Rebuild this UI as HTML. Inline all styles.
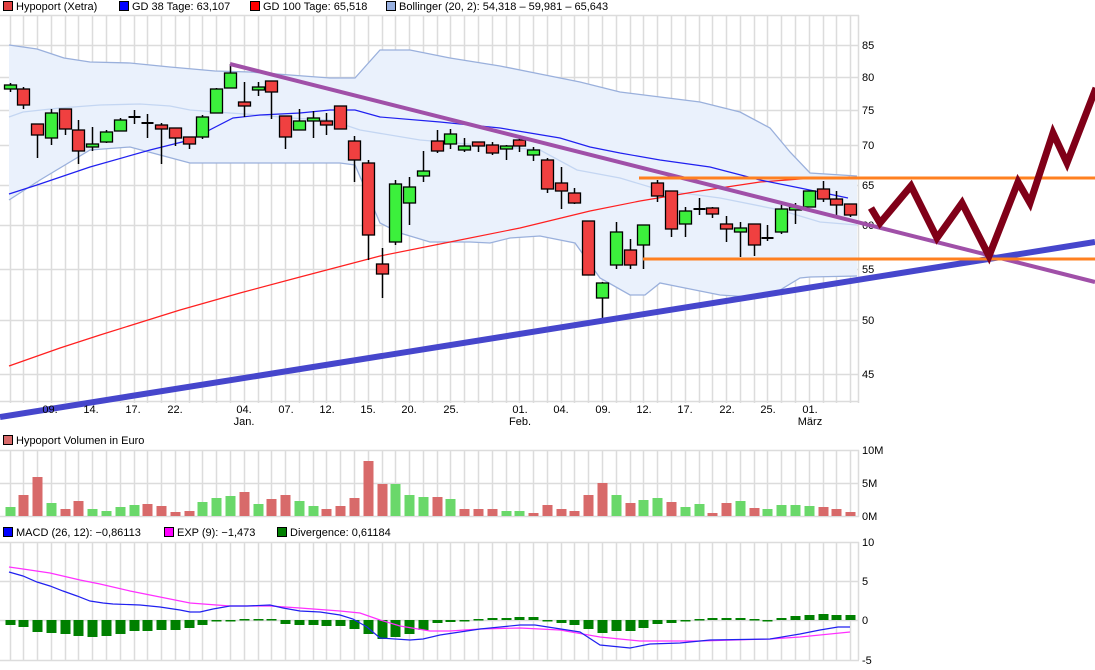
<!DOCTYPE html>
<html><head><meta charset="utf-8">
<style>
html,body{margin:0;padding:0;background:#fff;}
body{width:1095px;height:670px;overflow:hidden;font-family:"Liberation Sans",Arial,sans-serif;}
svg{display:block}
text{font-family:"Liberation Sans",Arial,sans-serif;font-size:11px;fill:#000}
</style></head>
<body>
<svg id="s" width="1095" height="670" xmlns="http://www.w3.org/2000/svg"></svg>
<script>
var S=document.getElementById('s');var h='';
function X(i){return 9.5+13.78*i;}
function pl(pts,c,w,extra){return '<polyline fill="none" stroke="'+c+'" stroke-width="'+w+'" points="'+pts.map(function(p){return p.join(',')}).join(' ')+'" '+(extra||'')+'/>';}
function leg(x,y,c,t){h+='<rect x="'+(x+0.5)+'" y="'+(y+0.5)+'" width="9" height="9" fill="'+c+'" stroke="#000"/><text x="'+(x+13)+'" y="'+(y+9)+'">'+t+'</text>';}
leg(3,1,'#e04040','Hypoport (Xetra)');leg(119,1,'#0000ff','GD 38 Tage: 63,107');leg(250,1,'#ff0000','GD 100 Tage: 65,518');leg(386,1,'#98b0e0','Bollinger (20, 2): 54,318 – 59,981 – 65,643');
leg(3,435,'#d86a6a','Hypoport Volumen in Euro');
leg(3,527,'#0000ff','MACD (26, 12): −0,86113');leg(164,527,'#ff00ff','EXP (9): −1,473');leg(277,527,'#008000','Divergence: 0,61184');
var g='#dcdcdc';
function vgrid(y1,y2){for(var i=0;i<62;i++){var x=Math.round(X(i))+0.5;h+='<line x1="'+x+'" y1="'+y1+'" x2="'+x+'" y2="'+y2+'" stroke="'+g+'" stroke-width="1.5"/>';}h+='<line x1="858.5" y1="'+y1+'" x2="858.5" y2="'+y2+'" stroke="'+g+'" stroke-width="1.5"/>';}
function hl(y,x2){h+='<line x1="0" y1="'+(y+0.5)+'" x2="'+(x2||859)+'" y2="'+(y+0.5)+'" stroke="'+g+'" stroke-width="1.5"/>';}
vgrid(15,403);
[15,45,77,110,145,185,225,269,320,374,401].forEach(function(y){hl(y)});
[[45,'85'],[77,'80'],[110,'75'],[145,'70'],[185,'65'],[225,'60'],[269,'55'],[320,'50'],[374,'45']].forEach(function(a){h+='<text x="862" y="'+(a[0]+4)+'">'+a[1]+'</text>';});
var up=[[9,45],[37,49],[64,58],[90,62],[130,63],[170,67],[215,71],[250,72],[290,75],[330,78],[355,78],[380,50],[410,50],[450,58],[500,66],[540,74],[580,82],[620,92],[660,97],[700,102],[740,112],[770,128],[790,152],[810,173],[857,176]];
var lo=[[9,200],[40,180],[90,150],[130,147],[160,155],[190,163],[300,163],[340,163],[355,165],[380,223],[400,233],[430,242],[470,242],[490,243],[510,238],[540,236],[575,243],[600,278],[630,295],[645,295],[660,283],[680,287],[720,295],[750,297],[780,290],[800,278],[810,277],[857,276]];
h+='<polygon fill="#eaf1fc" points="'+up.concat(lo.slice().reverse()).map(function(p){return p.join(',')}).join(' ')+'"/>';
h+=pl(up,'#9ab0dc',1.3);h+=pl(lo,'#9ab0dc',1.3);
h+=pl([[9,117],[23,112],[60,108],[100,105],[140,104],[170,106],[190,110],[230,113],[260,115],[290,118],[330,120],[360,130],[420,140],[480,145],[540,150],[577,170],[620,178],[660,190],[720,198],[780,210],[820,222],[857,225]],'#c4d6f2',1.3);
h+=pl([[9,366],[60,348],[100,335],[180,310],[240,293],[300,277],[380,256],[450,242],[520,228],[590,211],[640,201],[700,191],[760,182],[800,179],[850,177]],'#ff2020',1.2);
h+=pl([[9,194],[37,185],[90,167],[150,150],[190,140],[233,118],[260,115],[300,113],[330,110],[355,110],[380,117],[440,122],[500,128],[530,133],[560,138],[590,147],[620,153],[660,160],[710,167],[760,180],[800,188],[848,198]],'#2020f0',1.2);
var C=[[0,85,89,83,92,'g'],[1,89,105,87,109,'r'],[2,124,135,124,158,'r'],[3,113,138,109,145,'g'],[4,109,129,109,135,'r'],[5,130,151,120,164,'r'],[6,144,147,127,151,'g'],[7,132,142,130,143,'g'],[8,120,131,118,131,'g'],[9,117,117,110,124,'x'],[10,123,123,114,138,'x'],[11,125,129,123,164,'r'],[12,128,138,128,146,'r'],[13,137,144,137,149,'r'],[14,117,137,115,139,'g'],[15,89,113,88,113,'g'],[16,73,88,64,88,'g'],[17,102,106,82,117,'r'],[18,87,90,82,96,'g'],[19,81,92,81,119,'r'],[20,116,137,116,149,'r'],[21,121,130,109,130,'g'],[22,118,121,111,138,'g'],[23,121,125,113,135,'r'],[24,106,129,106,129,'r'],[25,141,160,136,182,'r'],[26,163,235,160,260,'r'],[27,264,274,248,298,'r'],[28,184,242,180,245,'g'],[29,187,203,177,225,'g'],[30,171,176,151,182,'g'],[31,141,151,130,153,'r'],[32,134,144,129,149,'g'],[33,146,150,138,152,'g'],[34,142,146,142,152,'r'],[35,145,153,142,155,'r'],[36,146,148,145,160,'g'],[37,140,146,135,152,'r'],[38,150,155,147,161,'g'],[39,160,189,158,193,'r'],[40,183,191,167,209,'r'],[41,193,203,188,204,'r'],[42,221,275,221,275,'r'],[43,283,298,282,323,'g'],[44,232,265,222,269,'g'],[45,250,265,239,269,'r'],[46,225,245,225,269,'g'],[47,183,196,180,202,'r'],[48,191,229,191,237,'r'],[49,211,224,207,237,'g'],[50,209,209,198,215,'x'],[51,208,214,207,218,'r'],[52,224,229,216,242,'r'],[53,228,232,222,257,'g'],[54,224,245,224,256,'r'],[55,238,238,225,241,'x'],[56,209,232,205,234,'g'],[57,207,210,203,224,'g'],[58,191,207,191,207,'g'],[59,189,199,181,202,'r'],[60,199,205,191,215,'r'],[61,204,215,204,217,'r']];
C.forEach(function(c){var x=Math.round(X(c[0]))+0.5;h+='<line x1="'+x+'" y1="'+c[3]+'" x2="'+x+'" y2="'+c[4]+'" stroke="#000" stroke-width="1.5"/>';
if(c[5]=='x'){h+='<line x1="'+(x-6)+'" y1="'+c[1]+'" x2="'+(x+6)+'" y2="'+c[1]+'" stroke="#000" stroke-width="2"/>';}
else h+='<rect x="'+(x-6)+'" y="'+c[1]+'" width="12" height="'+Math.max(3,c[2]-c[1])+'" fill="'+(c[5]=='g'?'#3cf03c':'#f04040')+'" stroke="#000" stroke-width="1.3"/>';});
h+='<line x1="230" y1="64" x2="1095" y2="282" stroke="#a050a8" stroke-width="4"/>';
h+='<line x1="0" y1="417" x2="1095" y2="242" stroke="#4646cc" stroke-width="6"/>';
h+='<line x1="639" y1="178" x2="1095" y2="178" stroke="#ff8020" stroke-width="3"/>';
h+='<line x1="643" y1="259" x2="1095" y2="259" stroke="#ff8020" stroke-width="3"/>';
h+=pl([[871,208],[880,223],[911,186],[937,238],[962,203],[989,256],[1018,182],[1030,203],[1053,133],[1067,163],[1096,88]],'#800018',7,'stroke-linejoin="miter" stroke-miterlimit="3"');
[[50,'09.'],[91,'14.'],[133,'17.'],[175,'22.'],[244,'04.'],[286,'07.'],[327,'12.'],[368,'15.'],[409,'20.'],[451,'25.'],[520,'01.'],[561,'04.'],[603,'09.'],[644,'12.'],[685,'17.'],[727,'22.'],[768,'25.'],[810,'01.']].forEach(function(a){h+='<text x="'+a[0]+'" y="413" text-anchor="middle">'+a[1]+'</text>';});
[[244,'Jan.'],[520,'Feb.'],[810,'März']].forEach(function(a){h+='<text x="'+a[0]+'" y="425" text-anchor="middle">'+a[1]+'</text>';});
vgrid(450,517);[450,483,516].forEach(function(y){hl(y)});
[[450,'10M'],[483,'5M'],[516,'0M']].forEach(function(a){h+='<text x="862" y="'+(a[0]+4)+'">'+a[1]+'</text>';});
var V=[[507,'g'],[495,'r'],[477,'r'],[503,'g'],[509,'r'],[501,'r'],[509,'g'],[511,'g'],[507,'g'],[505,'g'],[504,'r'],[506,'r'],[512,'r'],[511,'r'],[502,'g'],[498,'g'],[496,'g'],[492,'r'],[504,'g'],[499,'r'],[495,'r'],[501,'g'],[506,'g'],[509,'r'],[506,'r'],[498,'r'],[461,'r'],[484,'r'],[484,'g'],[495,'g'],[497,'g'],[497,'r'],[499,'g'],[509,'r'],[509,'r'],[509,'r'],[511,'g'],[511,'g'],[513,'r'],[505,'r'],[509,'r'],[511,'r'],[495,'r'],[483,'r'],[495,'g'],[503,'r'],[500,'g'],[498,'g'],[502,'r'],[507,'g'],[504,'g'],[513,'r'],[503,'r'],[501,'g'],[508,'r'],[509,'g'],[505,'g'],[505,'g'],[506,'g'],[507,'r'],[509,'r'],[512,'r']];
V.forEach(function(v,i){var x=Math.round(X(i))-4.5;h+='<rect x="'+x+'" y="'+v[0]+'" width="10" height="'+(516-v[0])+'" fill="'+(v[1]=='g'?'#6ad86a':'#d86a6a')+'"/>';});
vgrid(542,660);[542,581,620,660].forEach(function(y){hl(y)});
[[542,'10'],[581,'5'],[620,'0'],[660,'-5']].forEach(function(a){h+='<text x="862" y="'+(a[0]+4)+'">'+a[1]+'</text>';});
var D=[5,7,12,13,14,16,17,16,14,11,11,10,10,8,5,1,1,-1,-1,-1,4,5,5,6,6,9,14,19,17,14,10,3,2,0.5,-1,-2,-2,-3,-3,0.5,3,5,9,13,11,11,8,4,3,0.5,-1,-2,-2,-2,-1,0.5,-2,-4,-5,-6,-5,-5];
D.forEach(function(d,i){var x=Math.round(X(i))-4.5;var y=d>0?620:620+d;h+='<rect x="'+x+'" y="'+y+'" width="10" height="'+Math.max(1.5,Math.abs(d))+'" fill="#008000"/>';});
h+=pl([[9,567],[23,569],[50,573],[80,580],[100,584],[130,591],[190,603],[230,606],[270,606],[300,608],[340,611],[360,613],[380,620],[400,626],[430,631],[450,631],[480,629],[520,628],[560,630],[600,637],[640,641],[700,641],[770,639],[800,637],[850,632]],'#ff30ff',1.2);
h+=pl([[9,572],[23,576],[37,582],[50,586],[63,591],[77,596],[90,601],[103,603],[113,604],[140,605],[160,607],[180,610],[190,612],[200,612],[213,609],[230,606],[247,606],[270,605],[283,608],[300,611],[320,612],[340,615],[353,619],[367,627],[380,638],[410,640],[423,639],[440,635],[480,629],[520,625],[535,625],[580,632],[600,645],[630,648],[650,644],[680,643],[710,640],[770,639],[800,634],[820,630],[838,627],[850,627]],'#2020f0',1.2);
S.innerHTML=h;
</script>
</body></html>
